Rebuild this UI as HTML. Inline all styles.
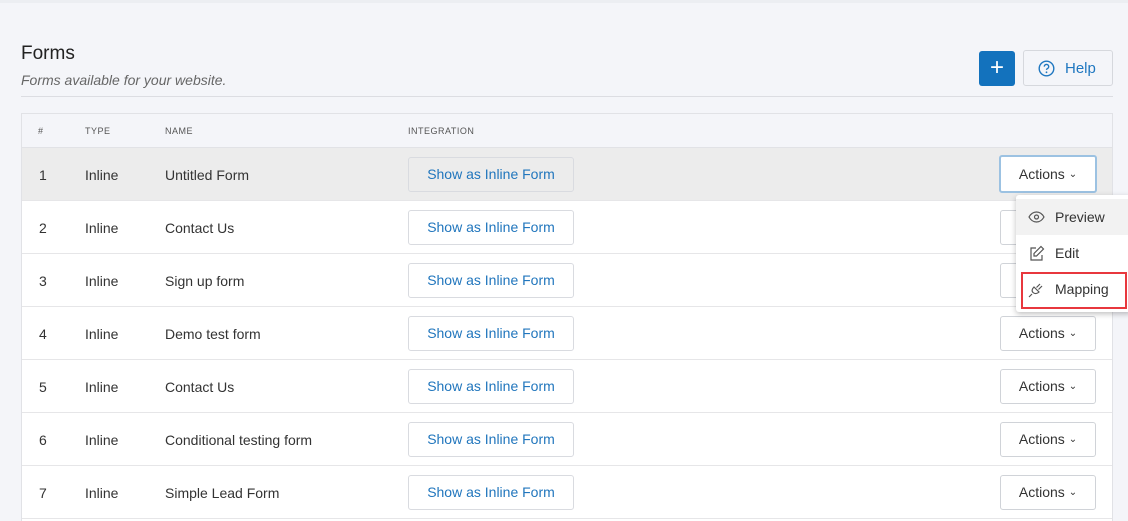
<!DOCTYPE html>
<html><head><style>
*{box-sizing:border-box;margin:0;padding:0}
html,body{width:1128px;height:521px;overflow:hidden}
body{background:#f4f5f9;font-family:"Liberation Sans",sans-serif;color:#333;position:relative}
.abs{position:absolute}
h1{position:absolute;left:21px;top:43px;font-size:19px;font-weight:normal;color:#222}
.sub{left:21px;top:72px;font-size:14px;font-style:italic;color:#666}
.hr{left:21px;top:96px;width:1092px;height:1px;background:#dcdde2}
.plus{left:979px;top:51px;width:36px;height:35px;background:#1372bd;border-radius:3px;color:#fff;font-size:24px;text-align:center;line-height:33px}
.help{left:1023px;top:50px;width:90px;height:36px;border:1px solid #d6d8dd;border-radius:3px;background:#f4f5f9;color:#1f77c0;font-size:15px;line-height:36px;padding-left:41px}
.table{left:21px;top:113px;width:1092px;height:420px;background:#fff;border:1px solid #e1e2e6}
.th{position:absolute;top:0;height:34px;width:100%;background:#f4f5f9;border-bottom:1px solid #e1e2e6;font-size:9px;letter-spacing:.5px;color:#555}
.th span,.row span{position:absolute}
.th span{top:12px}
.row{position:absolute;left:0;width:100%;height:53px;border-bottom:1px solid #e6e6e8;font-size:14px;color:#333}
.row span{top:19px}
.btn{position:absolute;left:386px;top:9px;width:166px;height:35px;border:1px solid #d9dbe0;border-radius:3px;color:#2176bd;font-size:14px;text-align:center;line-height:33px;background:#fff}
.act{position:absolute;left:978px;top:9px;width:96px;height:35px;border:1px solid #d0d3d8;border-radius:3px;font-size:14px;text-align:center;line-height:33px;background:#fff;color:#333}
.act i{font-style:normal;font-size:10px;position:relative;top:-2px}
.dd{left:1016px;top:195px;width:116px;height:117px;background:#fff;border-radius:3px;box-shadow:0 2px 6px rgba(0,0,0,.25)}
.it{position:absolute;left:0;width:116px;height:36px;font-size:14px;line-height:36px;padding-left:39px;color:#333}
.it svg{position:absolute;left:12px;top:10px}
</style></head><body>
<div class="abs" style="left:0;top:0;width:1128px;height:3px;background:#eceef2"></div>
<h1>Forms</h1>
<div class="abs sub">Forms available for your website.</div>
<div class="abs hr"></div>
<div class="abs plus">+</div>
<div class="abs help"><svg class="abs" style="left:14px;top:9px" width="17" height="17" viewBox="0 0 17 17"><circle cx="8.5" cy="8.5" r="7.3" fill="none" stroke="#1f77c0" stroke-width="1.4"/><path d="M6.3 6.6a2.2 2.2 0 1 1 2.9 2.1c-.6.3-.7.6-.7 1.2" fill="none" stroke="#1f77c0" stroke-width="1.4"/><circle cx="8.5" cy="12.3" r=".9" fill="#1f77c0"/></svg>Help</div>
<div class="abs table">
<div class="th"><span style="left:16px">#</span><span style="left:63px">TYPE</span><span style="left:143px">NAME</span><span style="left:386px">INTEGRATION</span></div>
<div class="row" style="top:34px;background:#ececec"><span style="left:17px">1</span><span style="left:63px">Inline</span><span style="left:143px">Untitled Form</span><div class="btn" style="background:#ececec">Show as Inline Form</div><div class="act" style="left:977px;top:7px;width:98px;height:38px;border:2px solid #9cc2e2;line-height:34px">Actions <i>⌄</i></div></div>
<div class="row" style="top:87px"><span style="left:17px">2</span><span style="left:63px">Inline</span><span style="left:143px">Contact Us</span><div class="btn">Show as Inline Form</div><div class="act">Actions <i>⌄</i></div></div>
<div class="row" style="top:140px"><span style="left:17px">3</span><span style="left:63px">Inline</span><span style="left:143px">Sign up form</span><div class="btn">Show as Inline Form</div><div class="act">Actions <i>⌄</i></div></div>
<div class="row" style="top:193px"><span style="left:17px">4</span><span style="left:63px">Inline</span><span style="left:143px">Demo test form</span><div class="btn">Show as Inline Form</div><div class="act">Actions <i>⌄</i></div></div>
<div class="row" style="top:246px"><span style="left:17px">5</span><span style="left:63px">Inline</span><span style="left:143px">Contact Us</span><div class="btn">Show as Inline Form</div><div class="act">Actions <i>⌄</i></div></div>
<div class="row" style="top:299px"><span style="left:17px">6</span><span style="left:63px">Inline</span><span style="left:143px">Conditional testing form</span><div class="btn">Show as Inline Form</div><div class="act">Actions <i>⌄</i></div></div>
<div class="row" style="top:352px"><span style="left:17px">7</span><span style="left:63px">Inline</span><span style="left:143px">Simple Lead Form</span><div class="btn">Show as Inline Form</div><div class="act">Actions <i>⌄</i></div></div>
</div>
<div class="abs dd">
<div class="it" style="top:4px;background:#f2f2f2"><svg width="17" height="16" viewBox="0 0 17 16"><path d="M1 8C3 4.5 5.5 3 8.5 3S14 4.5 16 8c-2 3.5-4.5 5-7.5 5S3 11.5 1 8z" fill="none" stroke="#555" stroke-width="1.2"/><circle cx="8.5" cy="8" r="2" fill="none" stroke="#555" stroke-width="1.2"/></svg>Preview</div>
<div class="it" style="top:40px"><svg width="17" height="17" viewBox="0 0 17 17"><path d="M8 3H3v12h11v-5" fill="none" stroke="#555" stroke-width="1.2"/><path d="M13 1.5l2.5 2.5-7 7H6V8.5z" fill="none" stroke="#555" stroke-width="1.2"/></svg>Edit</div>
<div class="it" style="top:76px"><svg width="17" height="17" viewBox="0 0 17 17"><path d="M1 16l3-3M6 6l5 5c-2 2-4.5 2-6 .5S4 8 6 6zM8.5 6.5L12 3M10.5 8.5L14 5" fill="none" stroke="#555" stroke-width="1.2"/></svg>Mapping</div>
</div>
<div class="abs" style="left:1021px;top:272px;width:106px;height:37px;border:2px solid #e8373d"></div>
</body></html>
